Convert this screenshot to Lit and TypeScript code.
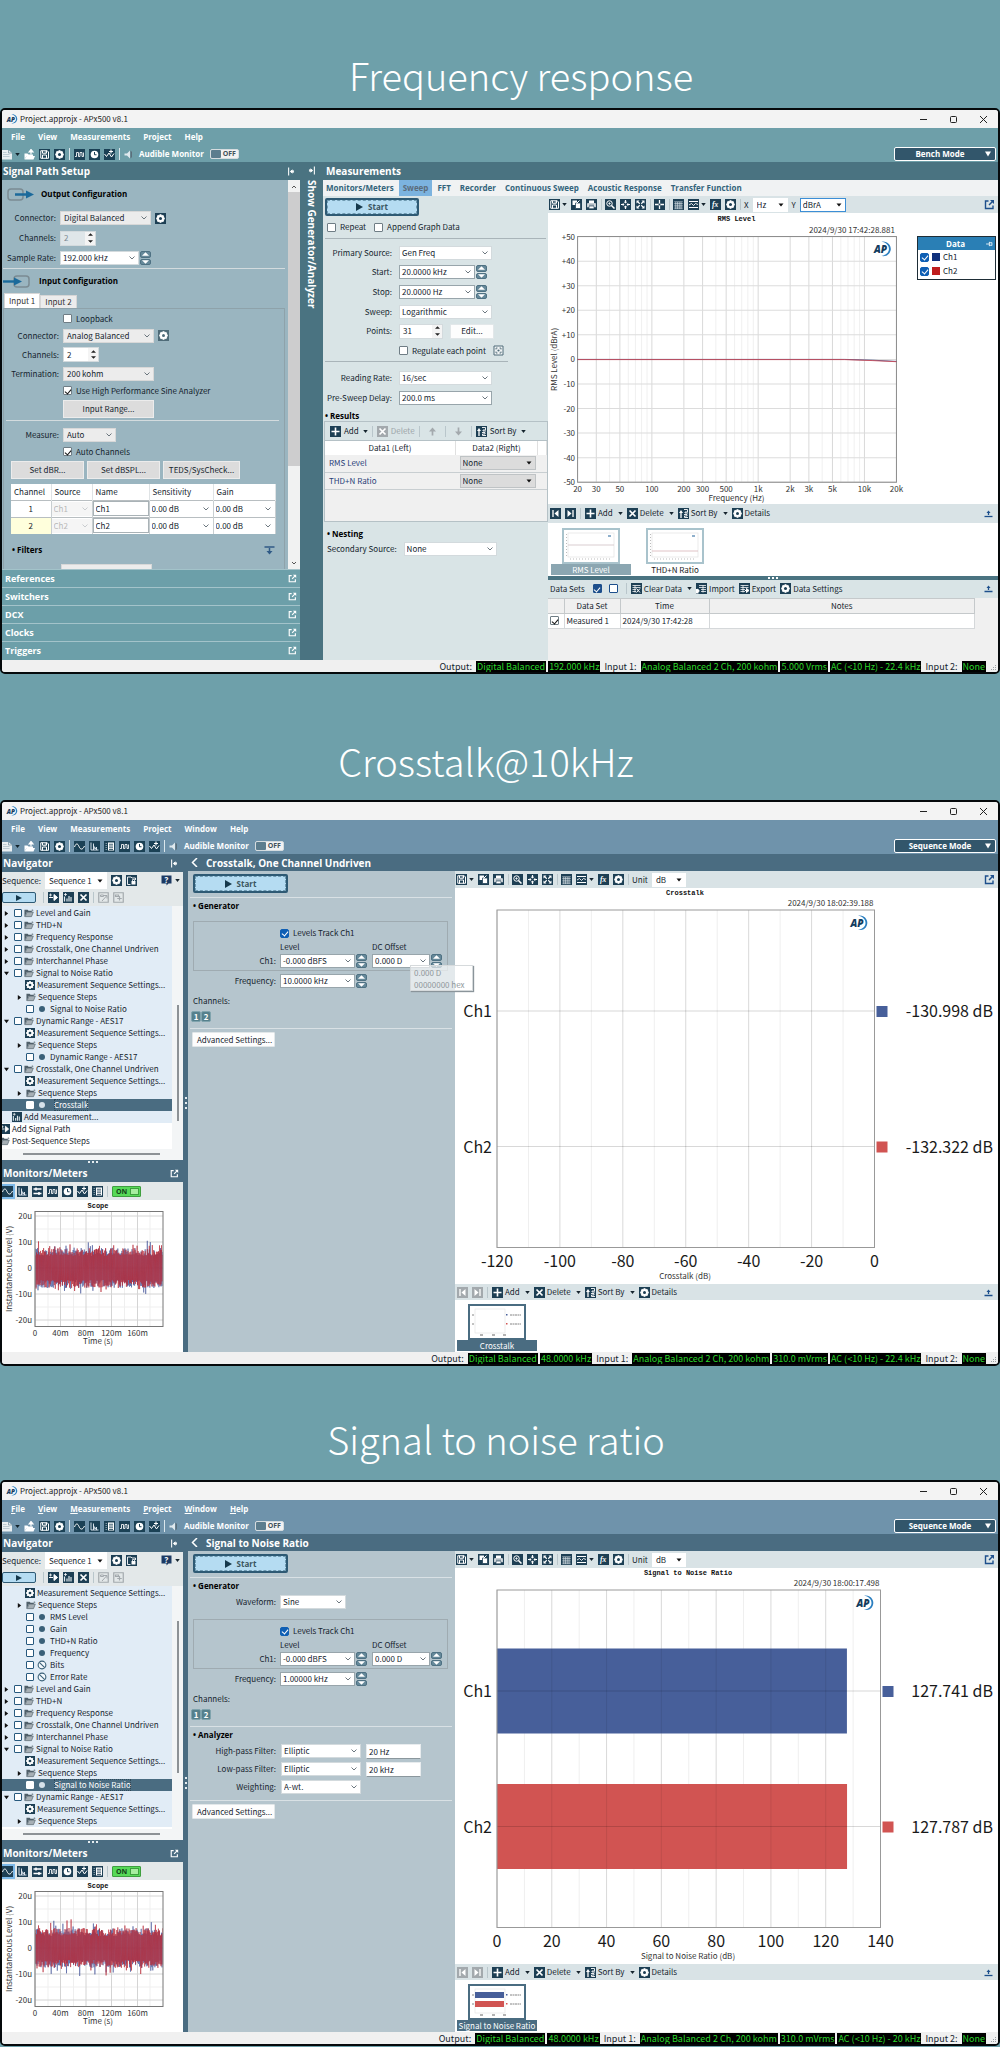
import { LitElement, html, svg, css, nothing, TemplateResult, SVGTemplateResult } from "lit";
import { customElement, property } from "lit/decorators.js";
import { classMap } from "lit/directives/class-map.js";

/* ---------- icons (22 x 22 artboard) ---------- */

const gearShape = svg`<g transform="translate(11 11)">
  <circle r="5.4" fill="none" stroke="#fff" stroke-width="3.4"/>
  ${[0, 45, 90, 135].map((a) => svg`<rect x="-1.9" y="-8.6" width="3.8" height="17.2" fill="#fff" transform="rotate(${a})"/>`)}
  <circle r="3" fill="currentColor"/></g>`;

const plate = svg`<rect width="22" height="22" fill="currentColor"/>`;

const icons: Record<string, SVGTemplateResult> = {
  page: svg`<path d="M0 2h13l7 6v13H0z" fill="#e9eff2"/><path d="M13 2v6h7" fill="none" stroke="#7d97a3" stroke-width="1.6"/><path d="M2 7h7M2 11h13M2 15h13" stroke="#a9bcc5" stroke-width="1.4"/>`,
  open: svg`<path d="M1 9h6l2 2h9v3H5L1 21z" fill="#fff"/><path d="M5 14h17l-3 7H1z" fill="#fff"/><path d="M14 11V4M10 6l4-5 4 5z" stroke="#fff" stroke-width="2.4" fill="#fff"/>`,
  save: svg`${plate}<path d="M3.5 3.5h13l2.5 2.5v12.5h-15.5z" fill="none" stroke="#fff" stroke-width="2"/><path d="M7 3.5v5h8v-5M7 19v-7h8v7" fill="none" stroke="#fff" stroke-width="2"/><path d="M11.5 5h2v2h-2z" fill="#fff"/>`,
  gear: svg`${plate}${gearShape}`,
  sine: svg`${plate}<path d="M1 12c3-8 6-8 9-1s7 7 11-1" fill="none" stroke="#fff" stroke-width="2"/>`,
  fft: svg`${plate}<path d="M4 3v15h15M9 18V5M9 9l3 7 3-4v6" fill="none" stroke="#e8eef6" stroke-width="1.8"/>`,
  list: svg`${plate}<path d="M8 3h12v16H8z" fill="#fff"/><path d="M10 6.5h8M10 10h8M10 13.5h8M10 17h8" stroke="currentColor" stroke-width="1.6"/><path d="M3 5h3M3 9h3M3 13h3M3 17h3" stroke="#9fb4c0" stroke-width="1.5"/>`,
  square: svg`${plate}<path d="M2 15h3V7h4v8h3V7h4v8h3V7" fill="none" stroke="#fff" stroke-width="1.7"/>`,
  clock: svg`${plate}<circle cx="11" cy="11" r="7.6" fill="#fff"/><path d="M11 6v5.5h4" fill="none" stroke="currentColor" stroke-width="2"/>`,
  trend: svg`${plate}<path d="M1 10l4 5 5-7 5 8 5-7" fill="none" stroke="#fff" stroke-width="2"/><path d="M14 1v8M10 5h8" stroke="#fff" stroke-width="2.2"/>`,
  meters: svg`${plate}<path d="M3 6h16M3 15h16" stroke="#fff" stroke-width="3"/><path d="M8 3v6M14 12v6" stroke="#fff" stroke-width="3"/>`,
  speaker: svg`<path d="M1 9h5l6-6v16l-6-6H1z" fill="#dfe9ee"/><path d="M13 3v16l3-3V6z" fill="#5b6f7b"/>`,
  copy: svg`${plate}<path d="M3 3h9v9H3z" fill="#fff"/><path d="M9 8h10v11H9z" fill="#fff" stroke="currentColor" stroke-width="1.5"/><path d="M17 3l-6 6" stroke="#fff" stroke-width="2"/>`,
  print: svg`${plate}<path d="M6 3h10v5H6z" fill="#fff"/><path d="M2.5 8.5h17v8h-17z" fill="#fff"/><path d="M5 12h12" stroke="currentColor" stroke-width="1.5"/><path d="M6 14h10v5.5H6z" fill="#fff" stroke="currentColor" stroke-width="1.3"/>`,
  zoom: svg`${plate}<circle cx="9" cy="9" r="5.5" fill="none" stroke="#fff" stroke-width="2"/><path d="M13 13l6 6" stroke="#fff" stroke-width="3"/><path d="M6.5 9h5M9 6.5v5" stroke="#fff" stroke-width="1.5"/>`,
  fit: svg`${plate}<path d="M11 2v6M11 14v6M2 11h6M14 11h6" stroke="#fff" stroke-width="2.4"/><path d="M7.5 5.5L11 9l3.5-3.5zM7.5 16.5L11 13l3.5 3.5zM5.5 7.5L9 11l-3.5 3.5zM16.5 7.5L13 11l3.5 3.5z" fill="#fff"/>`,
  expand: svg`${plate}<path d="M5 5l4.500 4.500M17 5l-4.500 4.500M5 17l4.500-4.500M17 17l-4.500-4.500" stroke="#fff" stroke-width="2.2"/><path d="M3 3h6L3 9zM19 3h-6l6 6zM3 19h6l-6-6zM19 19h-6l6-6z" fill="#fff"/>`,
  cross: svg`${plate}<path d="M11 2v18M2 11h18" stroke="#fff" stroke-width="2.6"/><circle cx="11" cy="11" r="2" fill="currentColor"/>`,
  table: svg`${plate}<path d="M2.5 5.5h17M2.5 9h17M2.5 12.5h17M2.5 16h17M2.5 19.5h17M5.5 6v14M9 6v14M12.5 6v14M16 6v14" stroke="#dfe8ec" stroke-width="1.2"/>`,
  style: svg`${plate}<path d="M2 5h18M2 17h18" stroke="#fff" stroke-width="2"/><path d="M2 12l5-3 4 4 4-4 5 2" fill="none" stroke="#fff" stroke-width="1.8"/>`,
  fx: svg`${plate}<text x="4" y="16.5" font-size="15" font-style="italic" font-weight="700" fill="#fff" font-family="Liberation Serif, serif">fx</text>`,
  first: svg`${plate}<path d="M6 4v14" stroke="#fff" stroke-width="2.6"/><path d="M17 4v14l-8-7z" fill="#fff"/>`,
  last: svg`${plate}<path d="M16 4v14" stroke="#fff" stroke-width="2.6"/><path d="M5 4v14l8-7z" fill="#fff"/>`,
  plus: svg`${plate}<path d="M11 3v16M3 11h16" stroke="#fff" stroke-width="3.2"/>`,
  x: svg`${plate}<path d="M5 5l12 12M17 5L5 17" stroke="#fff" stroke-width="3.4"/>`,
  sort: svg`${plate}<path d="M6 20V9" stroke="#fff" stroke-width="2.6"/><path d="M2 10l4-6 4 6z" fill="#fff"/><path d="M12 3h7v5h-5v2h6M12 13h6v3h-5v3h7" fill="none" stroke="#fff" stroke-width="1.8"/>`,
  dataClear: svg`${plate}<path d="M3 5h16M3 9h16M3 13h7M3 17h7M8 5v14" stroke="#fff" stroke-width="1.5"/><path d="M11 11l7 8M18 11l-7 8" stroke="#fff" stroke-width="2"/>`,
  dataIn: svg`${plate}<path d="M6 5h14M6 9h14M10 13h10M10 17h10M14 5v14" stroke="#fff" stroke-width="1.5"/><path d="M0 12h5v9H0z" fill="#fff"/><path d="M2 11l6 5-6 4" fill="#fff"/>`,
  dataOut: svg`${plate}<path d="M3 5h16M3 9h16M3 13h9M3 17h9M8 5v14" stroke="#fff" stroke-width="1.5"/><path d="M12 15h5M15 11l5 4-5 4z" stroke="#fff" stroke-width="2" fill="#fff"/>`,
  addPath: svg`${plate}<path d="M2 11h8M12 5v12l7-6z" stroke="#fff" stroke-width="2" fill="#fff"/><path d="M5 3v6M2 6h6" stroke="#fff" stroke-width="1.5"/>`,
  addMeas: svg`${plate}<path d="M3 19V9M8 19v-6M12 19V8M16 19v-9" stroke="#dfe8ec" stroke-width="2.4"/><path d="M5 2v6M2 5h6" stroke="#fff" stroke-width="1.5"/>`,
  lock: svg`${plate}<path d="M3 4h7l2 2h7v4" stroke="#fff" stroke-width="1.8" fill="none"/><path d="M3 4v15h6" stroke="#fff" stroke-width="1.8" fill="none"/><path d="M11 12h8v7h-8z" fill="#fff"/><path d="M13 12V9h4v3" stroke="#fff" stroke-width="1.5" fill="none"/>`,
  docIn: svg`<path d="M1.5 1.5h19v19h-19z" fill="none" stroke="currentColor" stroke-width="2.4"/><path d="M5 6h6v3H5zM8 18l9-10M12 7h6v6" fill="none" stroke="currentColor" stroke-width="2"/>`,
  docAdd: svg`<path d="M1.5 1.5h19v19h-19z" fill="none" stroke="currentColor" stroke-width="2.4"/><path d="M5 6h6v3H5zM13 8v9M8.5 13h9" fill="none" stroke="currentColor" stroke-width="2.4"/>`,
  help: svg`<path d="M1 1h20v16h-6l-4 4v-4H1z" fill="#1c3a63"/><text x="11" y="15" text-anchor="middle" font-size="16" font-weight="700" fill="#fff" font-family="Open Sans, sans-serif">?</text>`,
  folder: svg`<path d="M1 4h7l2 2h7v3H6L2 19H1z" fill="#50606a"/><path d="M6.5 9h14l-4 10H2.5z" fill="#a6afb5" stroke="#50606a" stroke-width="1.4"/><path d="M18 3l2 2-4 2" fill="none" stroke="#50606a" stroke-width="1.5"/>`,
  popout: svg`<path d="M9 4H3v15h15v-6" fill="none" stroke="currentColor" stroke-width="2.8"/><path d="M12 2h8v8l-3-3-6 6-2-2 6-6z" fill="currentColor"/>`,
  upload: svg`<path d="M3 17h16" stroke="currentColor" stroke-width="2.6"/><path d="M11 14V9" stroke="currentColor" stroke-width="2.6"/><path d="M7 10l4-5 4 5z" fill="currentColor"/>`,
  filterDown: svg`<path d="M1 4h20" stroke="currentColor" stroke-width="3"/><path d="M11 6v9" stroke="currentColor" stroke-width="3"/><path d="M5 12h12l-6 7z" fill="currentColor"/>`,
  pin: svg`<path d="M12 5v12M19 7v8M12 7.5h7M12 14.5h7" stroke="currentColor" stroke-width="2.2"/><path d="M3 11h9" stroke="currentColor" stroke-width="2.2"/>`,
  collapse: svg`<path d="M4 1v20" stroke="currentColor" stroke-width="2.6"/><path d="M16 11H10M8 11l5-4v8zM16 8v6" stroke="currentColor" stroke-width="2" fill="currentColor"/>`,
  collapseR: svg`<path d="M18 1v20" stroke="currentColor" stroke-width="2.6"/><path d="M6 11h6M14 11L9 7v8zM6 8v6" stroke="currentColor" stroke-width="2" fill="currentColor"/>`,
  up: svg`<path d="M11 19V9" stroke="currentColor" stroke-width="3.4"/><path d="M4 11l7-8 7 8z" fill="currentColor"/>`,
  down: svg`<path d="M11 3v10" stroke="currentColor" stroke-width="3.4"/><path d="M4 11l7 8 7-8z" fill="currentColor"/>`,
  ban: svg`<circle cx="11" cy="11" r="8.5" fill="#f5fafe" stroke="currentColor" stroke-width="2.4"/><path d="M5 5l12 12" stroke="currentColor" stroke-width="2.4"/>`,
  dot: svg`<circle cx="11" cy="11" r="6.6" fill="currentColor"/>`,
  target: svg`<path d="M2 2h18v18H2z" fill="#f1f4f5" stroke="currentColor" stroke-width="2"/><path d="M6 9V6h3M13 6h3v3M16 13v3h-3M9 16H6v-3" fill="none" stroke="currentColor" stroke-width="1.8"/><circle cx="11" cy="11" r="2.2" fill="currentColor"/>`,
};

const icon = (name: string, cls = "") =>
  html`<svg class="ic ${cls}" viewBox="0 0 22 22" aria-hidden="true">${icons[name]}</svg>`;

const apMark = (x: number, y: number) => svg`<g transform="translate(${x} ${y})">
  <text x="-7" y="4" font-family="Open Sans, sans-serif" font-size="10" font-weight="800" font-style="italic" fill="#123c5e">AP</text>
  <path d="M0.5 -7.5C8 -8.5 11 -2 9.5 2C8 6.5 4.5 7.5 0.5 7C5 6 8 3.5 8 0C8 -4 5 -6.5 0.5 -7.5z" fill="#2b7fc0"/></g>`;

const caret = html`<svg class="caret" viewBox="0 0 6 4" aria-hidden="true"><path d="M0 0h6L3 4z" fill="currentColor"/></svg>`;

/* ---------- shared form pieces ---------- */

const base = css`
  :host {
    display: block;
    font-family: "Noto Sans CJK SC", "Noto Sans", sans-serif;
    font-size: 8px;
    line-height: 12px;
    color: #15242e;
  }
  * { box-sizing: border-box; }
  button, input, select { font: inherit; color: inherit; margin: 0; }
  button { padding: 0; border: 0; background: none; white-space: nowrap; }
  .ic { width: 11px; height: 11px; flex: none; display: block; color: #1d3f54; }
  .ic.off { color: #a3a9ad; }
  .ic.white { color: #fff; }
  .ic.blue { color: #1d4f8c; }
  .ic.teal { color: #4f6b78; }
  .caret { width: 5px; height: 3px; flex: none; }
  .bar { display: flex; align-items: center; white-space: nowrap; }
  .bar button { display: flex; align-items: center; gap: 3px; }
  .bar i { width: 1px; height: 11px; background: #b9c6cb; flex: none; }
  .grow { flex: 1; }

  .sel { display: grid; align-items: center; height: 14px; min-width: 0; }
  .sel select {
    grid-area: 1 / 1; appearance: none; width: 100%; height: 14px; min-width: 0;
    border: 1px solid #d3dadd; background: #fff; padding: 0 0 0 2px; border-radius: 0; line-height: 12px;
  }
  .sel svg { grid-area: 1 / 1; justify-self: end; margin-right: 4px; width: 6px; height: 4px; pointer-events: none; }
  .sel.gray select { background: #ececec; border-color: #d8d8d8; padding-left: 3px; }
  .sel.edge select { border-color: #98a5ab; }
  .sel.plain select { border-color: #fff; padding-left: 3px; }
  .sel.focus select { border: 1px solid #3c8ed6; }
  .sel.dim { color: #9b9b9b; }
  .sel.dim select { background: #f1f1f1; border-color: #f1f1f1; }
  .spin { width: 11px; height: 14px; display: grid; gap: 1px; flex: none; }
  .spin button { background: #66899a; border-radius: 2px; display: grid; place-items: center; border: 1px solid #4e7183; min-height: 0; }
  .spin svg { width: 7px; height: 4px; display: block; color: #fff; }
  .num { display: flex; height: 15px; background: #fff; border: 1px solid #d3dadd; }
  .num input { width: 100%; min-width: 0; border: 0; background: none; padding: 0 0 0 3px; }
  .num .spin { width: 10px; height: 13px; gap: 0; }
  .num .spin button { background: #f4f4f4; border: 0; border-radius: 0; }
  .num .spin svg { color: #222; width: 5px; height: 3px; }
  .num input:disabled { background: #dfe6e9; color: #7c8a92; }
  .text { height: 15px; border: 1px solid #e8ecee; border-bottom-color: #8b979d; background: #fff; padding: 0 0 0 2px; width: 100%; min-width: 0; }
  .cb { display: flex; align-items: center; gap: 4px; white-space: nowrap; }
  input[type="checkbox"] {
    appearance: none; width: 9px; height: 9px; border: 1px solid #6f7d85; background: #fff;
    display: grid; place-items: center; flex: none; border-radius: 1px;
  }
  input[type="checkbox"]:checked::before {
    content: ""; width: 3px; height: 5px; border: solid #111; border-width: 0 1px 1px 0; transform: rotate(40deg);
  }
  input.blue:checked { background: #0f5fb4; border-color: #0f5fb4; border-radius: 2px; }
  input.blue:checked::before { border-color: #fff; }
  .btn { background: #fdfdfd; border: 1px solid #e2e7e9; height: 15px; padding: 0 4px; border-radius: 1px; }
  .hd, .start, .sect, .on, .strong { font-family: "Open Sans", "Noto Sans", sans-serif; font-weight: 700; }
  .start {
    height: 18px; border: 2px solid #2e5a74; border-radius: 2px; background: #b5dcf2; outline: 1px dashed #6f9ab1; outline-offset: -3px;
    color: #3a5560; display: flex; align-items: center; justify-content: center; gap: 5px;
  }
  .start svg { width: 7px; height: 8px; color: #16394c; }
  .hr { height: 1px; background: #a9b4b9; border: 0; margin: 0; }
  .sect { margin: 0; font-size: 8px; color: #000; }
  .lbl { text-align: right; white-space: nowrap; }
  .graphbar { height: 17px; background: #d9e3e6; padding: 0 3px 0 1px; gap: 4px; }
  .bar.graphbar button { gap: 2px; }
  .graphbar i { margin-right: -1px; }
  .navbar { height: 17px; background: #d9e3e6; padding: 0 4px 0 2px; gap: 4px; color: #16242e; }
  .bar.navbar button { gap: 2px; }
  .grp { display: flex; align-items: center; gap: 5px; }
  .chart { display: block; width: 100%; height: auto; background: #fff; }
  .chart text { font-family: "Noto Sans CJK SC", "Noto Sans", sans-serif; font-size: 8px; fill: #333; }
  .chart g text { font-family: "Open Sans", sans-serif; font-size: 10px; fill: #123c5e; }
  .chart .ttl { font-family: "Liberation Mono", monospace; font-weight: 700; font-size: 7px; fill: #111; }
  .chart .big { font-size: 16px; fill: #1a1a1a; }
`;

const chevron = html`<svg viewBox="0 0 12 8" aria-hidden="true"><path d="M1 1l5 5 5-5" fill="none" stroke="#5b6870" stroke-width="1.8"/></svg>`;
const solid = html`<svg viewBox="0 0 12 8" aria-hidden="true"><path d="M1 1h10L6 7z" fill="#111"/></svg>`;

const select = (value: string, o: { id?: string; cls?: string; label?: string; arrow?: TemplateResult; disabled?: boolean } = {}) =>
  html`<span class="sel ${o.cls ?? ""}"><select id=${o.id ?? nothing} aria-label=${o.label ?? nothing} ?disabled=${o.disabled}>
    <option>${value}</option></select>${o.arrow ?? chevron}</span>`;

const spin = () => html`<span class="spin">
  <button aria-label="Increase"><svg viewBox="0 0 8 4"><path d="M4 0l4 4H0z" fill="currentColor"/></svg></button>
  <button aria-label="Decrease"><svg viewBox="0 0 8 4"><path d="M0 0h8L4 4z" fill="currentColor"/></svg></button></span>`;

const number = (value: string, id: string, disabled = false) =>
  html`<span class="num"><input id=${id} .value=${value} ?disabled=${disabled} />${spin()}</span>`;

const check = (text: string, checked = false, cls = "") =>
  html`<label class="cb"><input type="checkbox" class=${cls} .checked=${checked} />${text}</label>`;

const tool = (name: string, label: string, drop = false, cls = "") =>
  html`<button aria-label=${label}>${icon(name, cls)}${drop ? caret : nothing}</button>`;

const cmd = (name: string, text: string, drop = false) =>
  html`<span class="grp"><button>${icon(name)}${text}</button>${drop ? html`<button aria-label="${text} options">${caret}</button>` : nothing}</span>`;

const startButton = () => html`<button class="start"><svg viewBox="0 0 7 8"><path d="M0 0l7 4-7 4z" fill="currentColor"/></svg>Start</button>`;

const navBar = (dim: boolean) => html`<div class="bar navbar">
  ${tool("first", "First", false, dim ? "off" : "")}${tool("last", "Last", false, dim ? "off" : "")}<i></i>
  ${cmd("plus", "Add", true)}${cmd("x", "Delete", true)}${cmd("sort", "Sort By", true)}${cmd("gear", "Details")}
  <span class="grow"></span>${tool("upload", "Collapse", false, "blue")}</div>`;

/* ---------- window frame ---------- */

interface StatusItem { label?: string; value?: string; }

@customElement("apx-frame")
class ApxFrame extends LitElement {
  @property({ type: Array }) menus: string[] = [];
  @property({ type: Array }) tools: string[] = [];
  @property({ type: Array }) status: StatusItem[] = [];
  @property() mode = "";
  @property({ type: Boolean }) mnemonics = false;

  static styles = [base, css`
    .frame { border: 2px solid #05090b; border-radius: 5px; overflow: hidden; background: #f0f0f0; }
    .title { height: 18px; background: #f3f3f3; display: flex; align-items: center; padding: 0 0 0 4px; color: #222; }
    .title .logo { width: 12px; height: 10px; margin-right: 2px; }
    .title h3 { font: inherit; margin: 0; flex: 1; }
    .title button { width: 30px; height: 18px; display: grid; place-items: center; }
    .title button svg { width: 9px; height: 9px; }
    .head { background: var(--bar); color: #fff; display: grid; grid-template-columns: 1fr auto; height: 34px; }
    .menu { display: flex; gap: 13px; padding-left: 9px; height: 18px; align-items: center; grid-column: 1 / 3; }
    .menu a { color: #fff; text-decoration: none; }
    .menu a u { text-underline-offset: 1px; }
    .tools { height: 16px; gap: 4px; }
    .bar.tools button { gap: 2px; }
    .tools i { background: #dbe7ec; height: 12px; width: 1px; }
    .tools .caret { color: #12232c; }
    .tools .ic { color: #1b4155; }
    .bar.tools .tog { display: grid; grid-template-columns: 10px 1fr; width: 29px; height: 10px; background: #f2f2f2; border-radius: 2px; border: 1px solid #d5dcdf; margin-left: 2px; color: #43525a; font-size: 7px; line-height: 8px; text-align: center; gap: 0; }
    .tog b { background: #5c7d8e; height: 8px; border-radius: 1px; }
    .mode { align-self: center; margin-right: 2px; width: 102px; height: 14px; border: 1px solid #fff; border-radius: 2px; background: #32566b; color: #fff; display: grid; grid-template-columns: 1fr 8px; align-items: center; padding-right: 2px; }
    .mode svg { width: 6px; height: 6px; }
    .status { height: 12px; display: flex; justify-content: flex-end; align-items: center; gap: 2px; padding-right: 12px; background: #f0f0f0; font-size: 9px; line-height: 11px; white-space: nowrap; position: relative; }
    .status b { font-weight: 400; background: #000; color: #2bd42b; padding: 0 1px; height: 11px; }
    .status span { padding: 0 2px; }
    .grip { position: absolute; right: 0; bottom: 0; width: 8px; height: 8px; }
  `];

  render() {
    return html`<div class="frame">
      <div class="title">
        <svg class="logo" viewBox="-8 -8 19 16" aria-hidden="true">${apMark(0, 0)}</svg>
        <h3>Project.approjx - APx500 v8.1</h3>
        <button aria-label="Minimize"><svg viewBox="0 0 9 9"><path d="M1 4.5h7" stroke="#222"/></svg></button>
        <button aria-label="Maximize"><svg viewBox="0 0 9 9"><rect x="1.5" y="1.5" width="6" height="6" rx="1" fill="none" stroke="#222"/></svg></button>
        <button aria-label="Close"><svg viewBox="0 0 9 9"><path d="M1 1l7 7M8 1L1 8" stroke="#222"/></svg></button>
      </div>
      <div class="head">
        <nav class="menu strong">${this.menus.map((m) => html`<a href="#">${this.mnemonics ? html`<u>${m[0]}</u>${m.slice(1)}` : m}</a>`)}</nav>
        <div class="bar tools strong">
          ${tool("page", "New", true)}${tool("open", "Open")}${tool("save", "Save")}${tool("gear", "Settings")}<i></i>
          ${this.tools.map((t) => tool(t, t))}<i></i>
          ${tool("speaker", "Speaker")}<span>Audible Monitor</span>
          <button class="tog" aria-label="Audible monitor off"><b></b>OFF</button>
        </div>
        <button class="mode strong">${this.mode}<svg viewBox="0 0 7 6"><path d="M0 0h7L3.5 6z" fill="#fff"/></svg></button>
      </div>
      <slot></slot>
      <div class="status">
        ${this.status.map((s) => (s.label ? html`<span>${s.label}</span>` : html`<b>${s.value}</b>`))}
        <svg class="grip" viewBox="0 0 8 8" aria-hidden="true"><path d="M5 5h1v1H5zM3 5h1v1H3zM5 3h1v1H5zM1 5h1v1H1zM3 3h1v1H3zM5 1h1v1H5z" fill="#9aa0a3"/></svg>
      </div>
    </div>`;
  }
}

/* ---------- bench mode ---------- */

@customElement("bench-view")
class BenchView extends LitElement {
  static styles = [base, css`
    .cols { display: grid; grid-template-columns: 298px 23px minmax(0, 1fr); }
    .hd { height: 18px; background: #4a7381; color: #fff; font-size: 10px; line-height: 18px; margin: 0; display: flex; align-items: center; justify-content: space-between; padding: 0 4px 0 1px; white-space: nowrap; }
    .hd .ic, .strip .ic { color: #fff; width: 9px; height: 9px; }
    .setup { display: flex; background: #9ab5c0; height: 389px; overflow: hidden; }
    .form { flex: 1; min-width: 0; padding: 0 3px 0 1px; }
    .form h4 { display: flex; align-items: center; gap: 6px; margin: 0; height: 28px; font-size: 8px; color: #000; padding-left: 4px; }
    .form h4 svg { width: 28px; height: 14px; }
    .form h4.in { height: 24px; padding-left: 0; gap: 8px; }
    .row { display: grid; grid-template-columns: 53px auto auto 1fr; column-gap: 4px; height: 20px; align-items: center; }
    .box .row { height: 19px; }
    .row.slim, .box .row.slim { height: 15px; }
    .box .row.high { height: 22px; }
    .meas { padding-top: 4px; }
    .w91 { width: 91px; } .w79 { width: 79px; } .w53 { width: 53px; }
    .w36 { width: 36px; }
    .spin { margin-left: -3px; } .num .spin { margin-left: 0; }
    .light { background: #d3dbde; }
    .tabs { display: flex; align-items: end; height: 15px; padding-left: 1px; }
    .tabs button { background: #ececec; height: 13px; padding: 0 4px; border: 1px solid #d6d6d6; border-bottom: 0; color: #333; }
    .tabs button.on { background: #fff; height: 15px; font-family: inherit; font-weight: 400; }
    .box { border: 1px solid #8ea2aa; border-bottom: 0; height: 262px; padding: 2px 5px 0 2px; }
    .gbtn { background: #dcdcdc; border: 1px solid #ececec; height: 18px; }
    .trio { display: grid; grid-template-columns: 73px 73px 77px; gap: 3px; padding: 2px 0 5px 5px; }
    .chan { margin-left: 5px; width: 265px; border-collapse: collapse; background: #fff; table-layout: fixed; }
    .chan th { font-weight: 400; text-align: left; height: 16px; padding: 0 0 0 3px; border-right: 1px solid #dfe3e5; }
    .chan td { padding: 0; height: 17px; border-top: 1px solid #b8bec1; border-right: 1px solid #c8ced1; text-align: center; }
    .chan td .sel select { border: 0; padding-left: 2px; }
    .chan td input { width: 100%; height: 15px; border: 1px solid #a9b2b6; padding: 0 2px; background: #fff; display: block; }
    .chan .act { background: #ffffdc; }
    .filters { display: flex; justify-content: space-between; align-items: center; padding: 8px 4px 0 6px; height: 24px; color: #000; }
    .filters .ic { color: #2f5a86; }
    .peek { margin: 6px 0 0 55px; width: 91px; }
    .scroll { width: 12px; background: #f1f2f2; display: flex; flex-direction: column; align-items: center; justify-content: space-between; }
    .scroll svg { width: 6px; height: 12px; }
    .scroll div { width: 12px; flex: 1; }
    .scroll div.thumb { background: #cdcdce; flex: 3; }
    .acc { background: #6c9fa9; padding-bottom: 1px; }
    .acc button { width: 100%; height: 18px; border-top: 1px solid #a3c3ca; color: #fff; font-size: 9px; display: flex; align-items: center; justify-content: space-between; padding: 0 3px; }
    .acc .ic { width: 9px; height: 9px; }
    .strip { background: #4a7381; color: #fff; font-size: 10px; display: flex; flex-direction: column; align-items: center; gap: 5px; padding-top: 4px; }
    .strip button { writing-mode: vertical-rl; line-height: 14px; }
    .main { display: grid; grid-template-columns: minmax(0, 225px) minmax(0, 1fr); grid-template-rows: 18px 16px 1fr; background: #d9e4e6; }
    .tabrow { grid-column: 1 / 3; background: #f0f2f3; display: flex; gap: 9px; padding-left: 3px; }
    .tabrow a { color: #33647b; text-decoration: none; line-height: 16px; white-space: nowrap; }
    .tabrow a.cur { background: #7cb3df; color: #5b6c7c; padding: 0 4px; margin: 0 -4px; }
    .main .hd { grid-column: 1 / 3; padding-left: 3px; }
    .cfg { padding-top: 2px; }
    .pad { padding: 0 2px; }
    .pad .start { width: 94px; }
    .opts { display: flex; gap: 8px; height: 22px; align-items: center; padding-left: 2px; }
    .block { padding-top: 4px; }
    .frow { display: grid; grid-template-columns: 69px auto auto 1fr; column-gap: 7px; align-items: center; height: 19px; }
    .frow.tall { height: 20px; }
    .frow .spin { margin-left: -6px; } .frow .num .spin { margin-left: 0; }
    .rate { padding-top: 6px; }
    .rule { padding: 1px 40px 0 2px; }
    .w93 { width: 93px; } .w76 { width: 76px; } .w44 { width: 44px; }
    .sect.res-t { padding: 4px 2px 0; line-height: 10px; }
    .results { border: 1px solid #b5c1c6; background: #f0f0f0; height: 101px; margin-left: 1px; }
    .rbar { height: 19px; background: #d9e4e6; padding-left: 5px; gap: 4px; border-bottom: 1px solid #b5c1c6; }
    .rbar .up { margin: 0 3px; }
    .rbar .dis { color: #9da5a9; }
    .res { width: 100%; border-collapse: collapse; table-layout: fixed; }
    .res th { font-weight: 400; height: 14px; padding: 0; background: #fff; border-right: 1px solid #e0e0e0; }
    .res td { height: 17px; padding: 0 2px 0 4px; border-bottom: 1px solid #c8ced1; color: #2a3f78; }
    .res .sel select { background: #dcdcdc; border-color: #bfc3c5; color: #15242e; }
    .nest { padding: 6px 4px; }
    .nestrow { display: grid; grid-template-columns: max-content 93px; gap: 7px; align-items: center; padding-top: 2px; }
    .graph { background: #fff; min-width: 0; display: flex; flex-direction: column; }
    .graphbar .sel { width: 35px; height: 15px; }
    .graphbar .sel.focus { width: 46px; }
    .plot { display: flex; align-items: flex-start; padding-right: 2px; }
    .plot .chart { flex: 1; min-width: 0; }
    .legend { width: 79px; margin-top: 23px; border: 1px solid #1e2d36; flex: none; background: #fff; padding-bottom: 1px; }
    .legend h5 { margin: 0; font-size: 8px; line-height: 13px; background: #2a7fb5; color: #fff; display: grid; grid-template-columns: 1fr 10px; text-align: center; align-items: center; padding-left: 8px; }
    .legend h5 .ic { width: 8px; height: 8px; }
    .legend label { display: flex; align-items: center; gap: 3px; height: 14px; padding-left: 2px; }
    .legend s { width: 8px; height: 8px; background: #10307c; }
    .legend .red s { background: #bf1d1d; }
    .navbar { height: 19px; }
    .thumbs { display: flex; height: 53px; gap: 4px; padding: 5px 3px 0; background: #fff; }
    .thumbs a { width: 80px; color: #222; text-decoration: none; text-align: center; display: grid; grid-template-rows: 36px 11px; justify-items: center; line-height: 11px; }
    .thumbs svg { width: 58px; height: 36px; border: 2px solid #a9c3cc; background: #fff; }
    .thumbs a span { width: 100%; }
    .thumbs a.cur span { background: #8ba6b1; color: #fff; }
    .split { height: 4px; background: #4a7381; color: #fff; display: flex; justify-content: center; align-items: center; gap: 2px; }
    .split u { width: 2px; height: 2px; background: #fff; }
    .navbar.sets { height: 18px; background: #d9e4e6; }
    .ds { border-collapse: collapse; width: 427px; table-layout: fixed; background: #fff; }
    .ds th { font-weight: 400; background: #f0f0f0; border: 1px solid #c5c9cb; border-left: 0; height: 15px; padding: 0; }
    .ds td { border: 1px solid #d5d8da; border-left: 0; height: 15px; padding: 0 2px; white-space: nowrap; }
    .dswrap { background: #f0f0f0; flex: 1; }
    .sq { display: flex; gap: 7px; margin: 0 4px; }
    .sq input:checked { background: #1d4f8c; border-color: #1d4f8c; }
    .sq input { border-color: #1d4f8c; }
    .sq input:checked::before { border-color: #fff; }
  `];

  private plot() {
    const x0 = 29.5, x1 = 347.5, y0 = 23.5, y1 = 268.5;
    const fx = (f: number) => x0 + ((x1 - x0) * Math.log10(f / 20)) / 3;
    const major = [30, 50, 100, 200, 300, 500, 1000, 2000, 3000, 5000, 10000];
    const minor = [40, 60, 70, 80, 90, 400, 600, 700, 800, 900, 4000, 6000, 7000, 8000, 9000];
    const ticks: [number, string][] = [[20, "20"], [30, "30"], [50, "50"], [100, "100"], [200, "200"], [300, "300"], [500, "500"], [1000, "1k"], [2000, "2k"], [3000, "3k"], [5000, "5k"], [10000, "10k"], [20000, "20k"]];
    const levels = [50, 40, 30, 20, 10, 0, -10, -20, -30, -40, -50];
    const fy = (v: number) => y0 + ((50 - v) * (y1 - y0)) / 100;
    return html`<svg class="chart" viewBox="0 0 368 290" role="img" aria-label="RMS Level">
      ${minor.map((f) => svg`<path d="M${fx(f)} ${y0}V${y1}" stroke="#f0f0f0"/>`)}
      ${major.map((f) => svg`<path d="M${fx(f)} ${y0}V${y1}" stroke="#d9d9d9"/>`)}
      ${levels.map((v) => svg`<path d="M${x0} ${fy(v)}H${x1}" stroke="#dcdcdc"/>`)}
      <rect x=${x0} y=${y0} width=${x1 - x0} height=${y1 - y0} fill="none" stroke="#8a8a8a"/>
      <path d="M${x0} 146H${fx(6500)}L${fx(12000)} 146.8L${x1} 148" fill="none" stroke="#2f3f7c" stroke-width="0.8"/>
      <path d="M${x0} 146.2H${fx(6500)}L${fx(12000)} 147.2L${x1} 148.3" fill="none" stroke="#c94a58" stroke-width="0.9"/>
      ${apMark(332, 36)}
      <text class="ttl" x="188" y="8" text-anchor="middle">RMS Level</text>
      <text x="346" y="20" text-anchor="end">2024/9/30 17:42:28.881</text>
      ${levels.map((v) => svg`<text x="27" y=${fy(v) + 3} text-anchor="end">${v > 0 ? "+" + v : v}</text>`)}
      ${ticks.map(([f, t]) => svg`<text x=${fx(f)} y="278" text-anchor="middle">${t}</text>`)}
      <text x="188" y="287" text-anchor="middle">Frequency (Hz)</text>
      <text transform="translate(9 146) rotate(-90)" text-anchor="middle">RMS Level (dBrA)</text>
    </svg>`;
  }

  private thumb(y: number, on: boolean) {
    return html`<svg viewBox="0 0 54 32" preserveAspectRatio="none" aria-hidden="true">
      <rect x="4" y="3" width="46" height="24" fill="none" stroke="#ddd" stroke-width="0.6"/>
      <path d="M4 ${y}H50" stroke=${on ? "#cfc0c4" : "#d8b4b8"} stroke-width="0.8"/>
      <path d="M2.5 4v22M6 29h42" stroke="#aaa" stroke-width="0.8" stroke-dasharray="1 2"/><path d="M44 5h3v2h-3z" fill="#8fb0cc"/></svg>`;
  }

  private channelRow(n: string, act: boolean) {
    return html`<tr><td class=${classMap({ act })}>${n}</td>
      <td>${select("Ch" + n, { cls: "dim", label: "Source", disabled: true })}</td>
      <td><input aria-label="Name" .value=${"Ch" + n} /></td>
      <td>${select("0.00 dB", { label: "Sensitivity" })}</td><td>${select("0.00 dB", { label: "Gain" })}</td></tr>`;
  }

  render() {
    const field = (label: string, id: string, control: TemplateResult, extra: unknown = nothing, cls = "row") =>
      html`<div class=${cls}><label class="lbl" for=${id}>${label}</label>${control}${extra}</div>`;
    return html`<div class="cols">
      <section>
        <h2 class="hd">Signal Path Setup${icon("collapse")}</h2>
        <div class="setup">
          <div class="form">
            <h4 class="strong"><svg viewBox="0 0 28 14"><rect x="1" y="2" width="15" height="11" rx="3" fill="none" stroke="#7b8b92" stroke-width="1.5"/><path d="M8 7.5h12" stroke="#1b6a9b" stroke-width="2.4"/><path d="M19 3.5l8 4-8 4z" fill="#1b6a9b"/></svg>Output Configuration</h4>
            ${field("Connector:", "oc", select("Digital Balanced", { id: "oc", cls: "gray w91" }), icon("gear"))}
            ${field("Channels:", "och", html`<span class="w36">${number("2", "och", true)}</span>`)}
            ${field("Sample Rate:", "osr", select("192.000 kHz", { id: "osr", cls: "w79" }), spin())}
            <hr class="hr light" />
            <h4 class="in strong"><svg viewBox="0 0 28 14"><rect x="11" y="2" width="15" height="11" rx="3" fill="none" stroke="#7b8b92" stroke-width="1.5"/><path d="M0 7.5h12" stroke="#1b6a9b" stroke-width="2.4"/><path d="M11 3.5l8 4-8 4z" fill="#1b6a9b"/></svg>Input Configuration</h4>
            <div class="tabs"><button class="on">Input 1</button><button>Input 2</button></div>
            <div class="box">
              <div class="row slim"><span></span>${check("Loopback")}</div>
              ${field("Connector:", "ic", select("Analog Balanced", { id: "ic", cls: "gray w91" }), icon("gear", "teal"))}
              ${field("Channels:", "ich", html`<span class="w36">${number("2", "ich")}</span>`)}
              ${field("Termination:", "it", select("200 kohm", { id: "it", cls: "gray w91" }))}
              <div class="row slim"><span></span>${check("Use High Performance Sine Analyzer", true)}</div>
              <div class="row high"><span></span><button class="gbtn w91">Input Range...</button></div>
              <hr class="hr light" />
              <div class="meas">${field("Measure:", "im", select("Auto", { id: "im", cls: "gray w53" }))}</div>
              <div class="row slim"><span></span>${check("Auto Channels", true)}</div>
              <div class="trio"><button class="gbtn">Set dBR...</button><button class="gbtn">Set dBSPL...</button><button class="gbtn">TEDS/SysCheck...</button></div>
              <table class="chan">
                <colgroup><col width="40" /><col width="41" /><col width="57" /><col width="64" /><col /></colgroup>
                <tr><th>Channel</th><th>Source</th><th>Name</th><th>Sensitivity</th><th>Gain</th></tr>
                ${this.channelRow("1", false)}${this.channelRow("2", true)}
              </table>
              <div class="filters strong"><span>• Filters</span>${icon("filterDown")}</div>
              <div class="peek">${select("", { cls: "gray", label: "Filter" })}</div>
            </div>
          </div>
          <div class="scroll" aria-hidden="true"><svg viewBox="0 0 6 12"><path d="M1 8l2-2 2 2" fill="none" stroke="#555"/></svg><div class="thumb"></div><div></div><svg viewBox="0 0 6 12"><path d="M1 5l2 2 2-2" fill="none" stroke="#555"/></svg></div>
        </div>
        <div class="acc">${["References", "Switchers", "DCX", "Clocks", "Triggers"].map((t) => html`<button class="strong">${t}${icon("popout", "white")}</button>`)}</div>
      </section>
      <div class="strip strong">${icon("collapseR")}<button>Show Generator/Analyzer</button></div>
      <section class="main">
        <h2 class="hd">Measurements</h2>
        <nav class="tabrow strong">${["Monitors/Meters", "Sweep", "FFT", "Recorder", "Continuous Sweep", "Acoustic Response", "Transfer Function"].map((t) => html`<a href="#" class=${classMap({ cur: t === "Sweep" })}>${t}</a>`)}</nav>
        <div class="cfg">
          <div class="pad">
            ${startButton()}
            <div class="opts">${check("Repeat")}${check("Append Graph Data")}</div>
            <hr class="hr" />
          </div>
          <div class="block">
            ${field("Primary Source:", "ps", select("Gen Freq", { id: "ps", cls: "w93" }), nothing, "frow")}
            ${field("Start:", "st", select("20.0000 kHz", { id: "st", cls: "edge w76" }), spin(), "frow tall")}
            ${field("Stop:", "sp", select("20.0000 Hz", { id: "sp", cls: "edge w76" }), spin(), "frow tall")}
            ${field("Sweep:", "sw", select("Logarithmic", { id: "sw", cls: "w93" }), nothing, "frow")}
            ${field("Points:", "pt", html`<span class="w44">${number("31", "pt")}</span>`, html`<button class="btn w44">Edit...</button>`, "frow tall")}
            <div class="frow"><span></span>${check("Regulate each point")}${icon("target", "teal")}</div>
          </div>
          <div class="rule"><hr class="hr" /></div>
          <div class="rate">
            ${field("Reading Rate:", "rr", select("16/sec", { id: "rr", cls: "w93" }), nothing, "frow tall")}
            ${field("Pre-Sweep Delay:", "pd", select("200.0 ms", { id: "pd", cls: "edge w93" }), nothing, "frow")}
          </div>
          <h4 class="sect res-t">• Results</h4>
          <div class="results">
            <div class="bar rbar">${cmd("plus", "Add")}${caret}<i></i><button class="dis">${icon("x", "off")}Delete</button><i></i>
              <span class="up">${icon("up", "off")}</span><i></i><span class="up">${icon("down", "off")}</span><i></i>${cmd("sort", "Sort By")}${caret}</div>
            <table class="res"><colgroup><col /><col width="82" /><col width="9" /></colgroup>
              <tr><th>Data1 (Left)</th><th>Data2 (Right)</th><th></th></tr>
              ${["RMS Level", "THD+N Ratio"].map((t) => html`<tr><td>${t}</td><td>${select("None", { label: t + " right", arrow: solid })}</td><td></td></tr>`)}
            </table>
          </div>
          <div class="nest">
            <h4 class="sect">• Nesting</h4>
            <div class="nestrow"><label for="ss" class="lbl">Secondary Source:</label>${select("None", { id: "ss" })}</div>
          </div>
        </div>
        <div class="graph">
          <div class="bar graphbar">
            ${tool("save", "Save", true)}${tool("copy", "Copy")}${tool("print", "Print")}<i></i>
            ${tool("zoom", "Zoom")}${tool("fit", "Fit")}${tool("expand", "Expand")}<i></i>${tool("cross", "Cursor")}<i></i>
            ${tool("table", "Table")}${tool("style", "Style", true)}${tool("fx", "Function")}${tool("gear", "Settings")}<i></i>
            <label for="ux">X</label>${select("Hz", { id: "ux", cls: "plain", arrow: solid })}
            <label for="uy">Y</label>${select("dBrA", { id: "uy", cls: "focus", arrow: solid })}
            <span class="grow"></span>${tool("popout", "Pop out", false, "blue")}
          </div>
          <div class="plot">${this.plot()}
            <div class="legend"><h5 class="strong">Data${icon("pin", "white")}</h5>
              <label><input type="checkbox" class="blue" .checked=${true} /><s></s>Ch1</label>
              <label class="red"><input type="checkbox" class="blue" .checked=${true} /><s></s>Ch2</label></div>
          </div>
          ${navBar(false)}
          <div class="thumbs"><a href="#" class="cur">${this.thumb(15, true)}<span>RMS Level</span></a><a href="#">${this.thumb(21, false)}<span>THD+N Ratio</span></a></div>
          <div class="split"><u></u><u></u><u></u></div>
          <div class="bar navbar sets"><span>Data Sets</span>
            <span class="sq"><input type="checkbox" aria-label="Select all" .checked=${true} /><input type="checkbox" aria-label="Select none" /></span><i></i>
            ${cmd("dataClear", "Clear Data", true)}${cmd("dataIn", "Import")}${cmd("dataOut", "Export")}${cmd("gear", "Data Settings")}
            <span class="grow"></span>${tool("upload", "Collapse", false, "blue")}</div>
          <div class="dswrap"><table class="ds"><colgroup><col width="16" /><col width="56" /><col width="89" /><col /></colgroup>
            <tr><th></th><th>Data Set</th><th>Time</th><th>Notes</th></tr>
            <tr><td><input type="checkbox" aria-label="Measured 1" .checked=${true} /></td><td>Measured 1</td><td>2024/9/30 17:42:28</td><td></td></tr></table></div>
        </div>
      </section>
    </div>`;
  }
}

/* ---------- sequence mode ---------- */

type Kind = "group" | "open" | "settings" | "steps" | "leaf" | "blocked" | "add" | "path" | "post";
interface Node { kind: Kind; text: string; sel?: boolean; }

interface BarModel {
  title: string; stamp: string; axis: string; right: number; ticks: number[]; titleX: number;
  channels: { name: string; value: string; color: string; fill: number }[];
}

const random = (seed: number) => () => {
  seed = (seed * 1664525 + 1013904223) % 4294967296;
  return seed / 4294967296;
};

@customElement("sequence-view")
class SequenceView extends LitElement {
  @property({ type: Array }) nodes: Node[] = [];
  @property({ type: Object }) model!: BarModel;
  @property() frequency = "";
  @property({ type: Boolean }) noise = false;
  @property({ type: Boolean }) hint = false;
  @property({ type: Number }) seed = 1;

  static styles = [base, css`
    .cols { display: grid; grid-template-columns: 181px 5px minmax(0, 1fr); }
    .hd { background: #4a6c81; color: #fff; font-size: 10px; height: 18px; margin: 0; display: flex; align-items: center; justify-content: space-between; padding: 0 4px 0 1px; white-space: nowrap; }
    .hd .ic { color: #fff; width: 9px; height: 9px; }
    .hd.mon { height: 18px; }
    .gut { background: #4a6c81; display: flex; flex-direction: column; justify-content: center; align-items: center; gap: 3px; }
    .gut u, .hsplit u { width: 2px; height: 2px; background: #e6edf1; }
    .hsplit { height: 4px; background: #4a6c81; display: flex; align-items: center; justify-content: center; gap: 2px; }
    .seq { background: #e3e8e9; height: 17px; gap: 4px; padding-right: 3px; }
    .seq .sel { width: 62px; height: 17px; }
    .seq .sel select { height: 17px; }
    .seq .run { width: 34px; height: 11px; border: 1px solid #2e5a74; border-radius: 2px; background: #b5dcf2; justify-content: center; margin-right: 3px; }
    .run svg { width: 6px; height: 6px; }
    .tree { display: grid; grid-template-columns: minmax(0, 1fr) 11px; background: #f3f5f6; height: 254px; grid-template-rows: 243px 11px; }
    .tree ul { list-style: none; margin: 0; padding: 1px 0 0; background: linear-gradient(#e1ecf6 1px, #fff 1px); overflow: hidden; }
    .tree li { display: flex; align-items: center; height: 12px; gap: 2px; background: #e1ecf6; white-space: nowrap; color: #16242e; }
    .tree .arr { width: 5px; height: 5px; flex: none; margin: 0 3px 0 1px; }
    .tree input { border: 1px solid #27597e; width: 8px; height: 8px; }
    .tree .ic { width: 10px; height: 10px; }
    .group, .open { padding-left: 1px; }
    .settings { padding-left: 23px; }
    .steps { padding-left: 13px; }
    .steps .arr { margin: 0 2px 0 2px; }
    .leaf, .blocked { padding-left: 24px; }
    .tree li.blocked, .tree li.leaf { gap: 3px; }
    .add { padding-left: 10px; }
    .tree li.path, .tree li.post { background: #fff; padding-left: 0; }
    .path .ic, .post .ic { margin-left: -2px; }
    .dotc { color: #3a6078; }
    .tree li.sel { background: #4a6c81; color: #fff; }
    .tree li.sel .ic { color: #d7e2ea; }
    .tree li.sel input { border-color: #fff; }
    .tree li.sel span { outline: 1px dotted #2d4858; outline-offset: -1px; }
    .vs { display: flex; justify-content: center; align-items: flex-end; }
    .vs div { width: 2px; background: #8d9296; margin-bottom: 28px; height: 116px; }
    .vs.high div { margin-bottom: 56px; height: 152px; }
    .hs { grid-column: 1 / 3; padding: 4px 23px 0 21px; }
    .hs div { height: 2px; background: #8d9296; }
    .mtools { height: 18px; background: #e3e8e9; gap: 4px; }
    .mtools .cur { outline: 2px solid #7cb8e8; }
    .bar .on { width: 29px; height: 11px; background: #57d957; border: 1px solid #3f9f3f; border-radius: 1px; color: #14431a; font-size: 7px; justify-content: space-between; padding: 0 1px 0 3px; line-height: 9px; }
    .on b { width: 9px; height: 7px; background: #a8eea0; border: 1px solid #3f9f3f; }
    .scope { padding-bottom: 1px; background: #fff; }
    .pane { display: grid; grid-template-columns: minmax(0, 267px) minmax(0, 1fr); grid-template-rows: 17px 1fr; background: #b5c5cd; }
    .pane > .hd { grid-column: 1 / 3; height: 17px; justify-content: flex-start; gap: 8px; padding-left: 3px; }
    .pane > .hd svg { width: 7px; height: 9px; }
    .cfg { padding: 3px 3px 0 2px; position: relative; }
    .cfg .start { width: 95px; margin-left: 3px; height: 19px; }
    .hr { background: #d9e1e5; }
    .gap4 { margin-top: 4px; }
    .sect { padding: 1px 3px 0; line-height: 14px; }
    .lv { border: 1px solid #9fabb1; margin: 8px 4px 0 3px; height: 50px; padding: 4px 4px 0 0; }
    .grid { display: grid; grid-template-columns: 82px 75px 9px 58px 12px; column-gap: 4px; align-items: center; }
    .grid .spin { margin-left: -3px; }
    .lv .r1 { height: 14px; } .lv .r2 { height: 13px; } .lv .r3 { height: 16px; }
    .r3 { height: 20px; }
    .below { margin-left: 4px; }
    .wave { display: grid; grid-template-columns: 86px 66px; column-gap: 4px; height: 18px; align-items: center; }
    .chs { padding: 4px 3px 0; }
    .chips { display: flex; padding: 4px 1px 6px; }
    .chips button { width: 10px; height: 11px; background: #55808c; border: 1px solid #7fa3ad; color: #fff; font-weight: 700; border-radius: 2px; line-height: 9px; }
    .flt { display: grid; grid-template-columns: 86px 80px 55px; column-gap: 5px; align-items: center; height: 18px; }
    .adv { margin: 3px 2px 0; width: 83px; display: block; }
    .hint { position: absolute; left: 222px; top: 94px; width: 63px; height: 26px; z-index: 2; background: #ffffffa0; border: 1px solid #d6dadc; box-shadow: 1px 1px 1px #8a949a; color: #8f979b; padding: 1px 3px; line-height: 12px; white-space: nowrap; }
    .graph { background: #fff; display: flex; flex-direction: column; min-width: 0; }
    .navbar { height: 16px; }
    .graphbar .sel { width: 34px; height: 16px; }
    .thumbs { padding: 4px 2px 0; }
    .thumbs a { width: 80px; color: #fff; text-decoration: none; text-align: center; display: grid; grid-template-rows: 36px 11px; justify-items: center; line-height: 11px; }
    .thumbs svg { width: 58px; height: 36px; border: 2px solid #4a6c81; background: #fff; }
    .thumbs span { width: 100%; background: #4a6c81; white-space: nowrap; }
  `];

  private scope() {
    const rnd = random(this.seed);
    const trace = () => {
      let d = "";
      for (let i = 0; i <= 250; i++) {
        const spike = rnd() > 0.9 ? 3 + rnd() * 7 : 0;
        const amp = 12 + rnd() * 8 + spike;
        d += `${i ? "L" : "M"}${(33.5 + i * 0.508).toFixed(1)} ${(68 + (i % 2 ? amp : -amp)).toFixed(1)}`;
      }
      return d;
    };
    const ys = [16, 42, 68, 94, 120];
    const xs = [33, 58.5, 84, 109.5, 135.5];
    const labels = ["20u", "10u", "0", "-10u", "-20u"];
    const times = ["0", "40m", "80m", "120m", "160m"];
    return html`<svg class="chart" viewBox="0 0 181 151" role="img" aria-label="Scope">
      ${[29, 55, 81, 107].map((y) => svg`<path d="M33 ${y}H161" stroke="#efefef"/>`)}
      ${[46, 71.5, 97, 122.5, 148].map((x) => svg`<path d="M${x} 11V126" stroke="#efefef"/>`)}
      ${ys.map((y) => svg`<path d="M33 ${y}H161" stroke="#d4d4d4"/>`)}${xs.map((x) => svg`<path d="M${x} 11V126" stroke="#d4d4d4"/>`)}
      <path d=${trace()} fill="none" stroke="#3e4f95" stroke-width="0.6" opacity="0.9"/>
      <path d=${trace()} fill="none" stroke="#b82a38" stroke-width="0.7" opacity="0.85"/>
      <rect x="33" y="11.5" width="128" height="115" fill="none" stroke="#777"/>
      <text class="ttl" x="96" y="8" text-anchor="middle">Scope</text>
      ${ys.map((y, i) => svg`<text x="30" y=${y + 3} text-anchor="end">${labels[i]}</text>`)}
      ${xs.map((x, i) => svg`<text x=${x} y="136" text-anchor="middle">${times[i]}</text>`)}
      <text x="96" y="144" text-anchor="middle">Time (s)</text>
      <text transform="translate(10 69) rotate(-90)" text-anchor="middle">Instantaneous Level (V)</text>
    </svg>`;
  }

  private plot() {
    const m = this.model, x0 = 42, x1 = m.right, y0 = 22, y1 = 359.5;
    const lo = m.ticks[0], hi = m.ticks[m.ticks.length - 1];
    const fx = (v: number) => x0 + ((v - lo) / (hi - lo)) * (x1 - x0);
    const rows = [123, 258.5];
    return html`<svg class="chart" viewBox="0 0 543 396" role="img" aria-label=${m.title}>
      ${m.ticks.slice(1).map((t) => svg`<path d="M${fx(t - 10)} ${y0}V${y1}" stroke="#efefef"/>`)}
      ${m.ticks.map((t) => svg`<path d="M${fx(t)} ${y0}V${y1}" stroke="#d9d9d9"/>`)}
      ${m.channels.map((c, i) => svg`
        ${c.fill ? svg`<rect x=${x0} y=${rows[i] - 42.5} width=${fx(c.fill) - x0} height="85" fill=${c.color}/>
          ${m.ticks.map((t) => (t < c.fill ? svg`<path d="M${fx(t)} ${rows[i] - 42}v84" stroke="#000" opacity="0.08"/>` : nothing))}` : nothing}
        <path d="M${x0} ${rows[i]}H${x1}" stroke="#000" opacity="0.15"/>
        <rect x=${x1 + 2} y=${rows[i] - 5} width="11" height="11" fill=${c.color}/>
        <text class="big" x="37" y=${rows[i] + 6} text-anchor="end">${c.name}</text>
        <text class="big" x="538" y=${rows[i] + 6} text-anchor="end">${c.value}</text>`)}
      <rect x=${x0} y=${y0} width=${x1 - x0} height=${y1 - y0} fill="none" stroke="#999"/>
      ${apMark(x1 - 17, 35)}
      <text class="ttl" x=${m.titleX} y="7" text-anchor="middle">${m.title}</text>
      <text x=${x1 - 1} y="18" text-anchor="end">${m.stamp}</text>
      ${m.ticks.map((t) => svg`<text class="big" x=${fx(t)} y="379" text-anchor="middle">${t}</text>`)}
      <text x=${m.titleX} y="391" text-anchor="middle">${m.axis}</text>
    </svg>`;
  }

  private node(n: Node) {
    const right = html`<svg class="arr" viewBox="0 0 6 6"><path d="M1 0l4 3-4 3z" fill="#111"/></svg>`;
    const down = html`<svg class="arr" viewBox="0 0 6 6"><path d="M0 1h6L3 5z" fill="#111"/></svg>`;
    const box = html`<input type="checkbox" aria-label=${n.text} />`;
    const parts: Record<Kind, unknown> = {
      group: [right, box, icon("folder")],
      open: [down, box, icon("folder")],
      settings: icon("gear"),
      steps: [right, icon("folder")],
      leaf: [box, icon("dot", "dotc")],
      blocked: [box, icon("ban", "dotc")],
      add: icon("addMeas"),
      path: icon("addPath"),
      post: icon("folder"),
    };
    return html`<li class="${n.kind} ${n.sel ? "sel" : ""}">${parts[n.kind]}<span>${n.text}</span></li>`;
  }

  private thumb() {
    return html`<svg viewBox="0 0 54 32" preserveAspectRatio="none" aria-hidden="true">
      <rect x="5" y="3" width="30" height="24" fill="none" stroke="#e2e2e2" stroke-width="0.6"/>
      ${this.model.channels.map((c, i) => svg`${c.fill ? svg`<rect x="5" y=${6 + i * 9} width="29" height="6" fill=${c.color}/>` : nothing}
        <path d="M40 ${9 + i * 9}h11M2 ${9 + i * 9}h2" stroke="#777" stroke-width="0.9" stroke-dasharray="2 0.5"/><path d="M36 ${8 + i * 9}h1.5v1.5H36z" fill=${c.color}/>`)}
      <path d="M10 29h3M22 29h3M33 29h3" stroke="#666"/></svg>`;
  }

  render() {
    return html`<div class="cols">
      <section>
        <h2 class="hd">Navigator${icon("collapse")}</h2>
        <div class="bar seq"><label for="sq">Sequence:</label>${select("Sequence 1", { id: "sq", cls: "plain", arrow: solid })}
          ${tool("gear", "Sequence settings")}${tool("lock", "Lock")}<span class="grow"></span>${tool("help", "Help", true)}</div>
        <div class="bar seq"><button class="run" aria-label="Run"><svg viewBox="0 0 6 6"><path d="M0 0l6 3-6 3z" fill="#16394c"/></svg></button><i></i>
          ${tool("addPath", "Add path")}${tool("addMeas", "Add measurement")}${tool("x", "Delete")}<i></i>${tool("docIn", "Import", false, "off")}${tool("docAdd", "Append", false, "off")}</div>
        <div class="tree"><ul>${this.nodes.map((n) => this.node(n))}</ul>
          <div class=${classMap({ vs: true, high: this.noise })}><div></div></div><div class="hs"><div></div></div></div>
        <div class="hsplit"><u></u><u></u><u></u></div>
        <h2 class="hd mon">Monitors/Meters${icon("popout")}</h2>
        <div class="bar mtools"><button class="cur" aria-label="Scope">${icon("sine")}</button>${["fft", "meters", "square", "clock", "trend", "list"].map((t) => tool(t, t))}<i></i><button class="on">ON<b></b></button></div>
        <div class="scope">${this.scope()}</div>
      </section>
      <div class="gut"><u></u><u></u><u></u></div>
      <section class="pane">
        <h2 class="hd"><svg viewBox="0 0 7 9"><path d="M6 0L1.5 4.5 6 9" fill="none" stroke="#fff" stroke-width="1.5"/></svg>${this.noise ? "Signal to Noise Ratio" : "Crosstalk, One Channel Undriven"}</h2>
        <div class="cfg">
          ${startButton()}
          <hr class="hr gap4" />
          <h4 class="sect">• Generator</h4>
          ${this.noise ? html`<div class="wave"><label class="lbl" for="wf">Waveform:</label>${select("Sine", { id: "wf" })}</div>` : nothing}
          <div class="lv">
            <div class="grid r1"><span></span>${check("Levels Track Ch1", true, "blue")}</div>
            <div class="grid r2"><span></span><span>Level</span><span></span><span>DC Offset</span></div>
            <div class="grid r3"><label class="lbl" for="l1">Ch1:</label>${select("-0.000 dBFS", { id: "l1", cls: "edge" })}${spin()}${select("0.000 D", { label: "DC Offset", cls: "edge" })}${spin()}</div>
          </div>
          <div class="grid r3 below"><label class="lbl" for="fq">Frequency:</label>${select(this.frequency, { id: "fq", cls: "edge" })}${spin()}</div>
          <div class="chs">Channels:</div>
          <div class="chips"><button>1</button><button>2</button></div>
          <hr class="hr" />
          ${this.noise ? html`<h4 class="sect">• Analyzer</h4>
            <div class="flt"><label class="lbl" for="hp">High-pass Filter:</label>${select("Elliptic", { id: "hp" })}<input class="text" aria-label="High-pass frequency" .value=${"20 Hz"} /></div>
            <div class="flt"><label class="lbl" for="lp">Low-pass Filter:</label>${select("Elliptic", { id: "lp" })}<input class="text" aria-label="Low-pass frequency" .value=${"20 kHz"} /></div>
            <div class="flt"><label class="lbl" for="wt">Weighting:</label>${select("A-wt.", { id: "wt" })}</div>
            <hr class="hr gap4" />` : nothing}
          <button class="btn adv">Advanced Settings...</button>
          ${this.hint ? html`<div class="hint" role="tooltip">0.000 D<br />00000000 hex</div>` : nothing}
        </div>
        <div class="graph">
          <div class="bar graphbar">
            ${tool("save", "Save", true)}${tool("copy", "Copy")}${tool("print", "Print")}<i></i>
            ${tool("zoom", "Zoom")}${tool("fit", "Fit")}${tool("expand", "Expand")}<i></i>
            ${tool("table", "Table")}${tool("style", "Style", true)}${tool("fx", "Function")}${tool("gear", "Settings")}<i></i>
            <label for="un">Unit</label>${select("dB", { id: "un", cls: "plain", arrow: solid })}
            <span class="grow"></span>${tool("popout", "Pop out", false, "blue")}
          </div>
          ${this.plot()}
          ${navBar(true)}
          <div class="thumbs"><a href="#">${this.thumb()}<span>${this.model.title}</span></a></div>
        </div>
      </section>
    </div>`;
  }
}

/* ---------- page ---------- */

const g = (text: string): Node => ({ kind: "group", text });
const o = (text: string): Node => ({ kind: "open", text });
const settings: Node = { kind: "settings", text: "Measurement Sequence Settings..." };
const steps: Node = { kind: "steps", text: "Sequence Steps" };
const leaf = (text: string, sel = false): Node => ({ kind: "leaf", text, sel });

const crosstalkNodes: Node[] = [
  g("Level and Gain"), g("THD+N"), g("Frequency Response"), g("Crosstalk, One Channel Undriven"), g("Interchannel Phase"),
  o("Signal to Noise Ratio"), settings, steps, leaf("Signal to Noise Ratio"),
  o("Dynamic Range - AES17"), settings, steps, leaf("Dynamic Range - AES17"),
  o("Crosstalk, One Channel Undriven"), settings, steps, leaf("Crosstalk", true),
  { kind: "add", text: "Add Measurement..." }, { kind: "path", text: "Add Signal Path" }, { kind: "post", text: "Post-Sequence Steps" },
];
const noiseNodes: Node[] = [
  settings, steps, leaf("RMS Level"), leaf("Gain"), leaf("THD+N Ratio"), leaf("Frequency"),
  { kind: "blocked", text: "Bits" }, { kind: "blocked", text: "Error Rate" },
  g("Level and Gain"), g("THD+N"), g("Frequency Response"), g("Crosstalk, One Channel Undriven"), g("Interchannel Phase"),
  o("Signal to Noise Ratio"), settings, steps, leaf("Signal to Noise Ratio", true),
  o("Dynamic Range - AES17"), settings, steps,
];

const BLUE = "#475f9a", RED = "#d15452";
const crosstalk: BarModel = {
  title: "Crosstalk", stamp: "2024/9/30 18:02:39.188", axis: "Crosstalk (dB)", right: 419.5, titleX: 230,
  ticks: [-120, -100, -80, -60, -40, -20, 0],
  channels: [{ name: "Ch1", value: "-130.998 dB", color: BLUE, fill: 0 }, { name: "Ch2", value: "-132.322 dB", color: RED, fill: 0 }],
};
const noise: BarModel = {
  title: "Signal to Noise Ratio", stamp: "2024/9/30 18:00:17.498", axis: "Signal to Noise Ratio (dB)", right: 425.5, titleX: 233,
  ticks: [0, 20, 40, 60, 80, 100, 120, 140],
  channels: [{ name: "Ch1", value: "127.741 dB", color: BLUE, fill: 127.741 }, { name: "Ch2", value: "127.787 dB", color: RED, fill: 127.787 }],
};

const status = (rate: string, level: string, band: string): StatusItem[] => [
  { label: "Output:" }, { value: "Digital Balanced" }, { value: rate }, { label: "Input 1:" },
  { value: "Analog Balanced 2 Ch, 200 kohm" }, { value: level }, { value: band }, { label: "Input 2:" }, { value: "None" },
];
const benchTools = ["square", "clock", "trend"];
const seqTools = ["sine", "fft", "list", "square", "clock", "trend"];
const seqMenus = ["File", "View", "Measurements", "Project", "Window", "Help"];

@customElement("app-root")
class AppRoot extends LitElement {
  static styles = css`
    :host { display: block; background: #6ea0aa; padding-bottom: 1px; }
    h1 { margin: 0; color: #fff; font-family: "Noto Sans CJK SC", "Noto Sans", sans-serif; font-weight: 300; font-size: 38px; line-height: 56px; text-align: center; }
    .first { padding: 47px 0 5px 42px; }
    .second { padding: 59px 28px 11px 0; }
    .third { padding: 45px 8px 13px 0; }
    .bench { --bar: #6e9fa9; }
    .seq { --bar: #6f93ab; }
  `;

  render() {
    return html`
      <h1 class="first">Frequency response</h1>
      <apx-frame class="bench" .menus=${["File", "View", "Measurements", "Project", "Help"]} .tools=${benchTools} mode="Bench Mode"
        .status=${status("192.000 kHz", "5.000 Vrms", "AC (<10 Hz) - 22.4 kHz")}><bench-view></bench-view></apx-frame>
      <h1 class="second">Crosstalk@10kHz</h1>
      <apx-frame class="seq" .menus=${seqMenus} .tools=${seqTools} mode="Sequence Mode"
        .status=${status("48.0000 kHz", "310.0 mVrms", "AC (<10 Hz) - 22.4 kHz")}>
        <sequence-view .nodes=${crosstalkNodes} .model=${crosstalk} frequency="10.0000 kHz" hint seed="7"></sequence-view></apx-frame>
      <h1 class="third">Signal to noise ratio</h1>
      <apx-frame class="seq" mnemonics .menus=${seqMenus} .tools=${seqTools} mode="Sequence Mode"
        .status=${status("48.0000 kHz", "310.0 mVrms", "AC (<10 Hz) - 20 kHz")}>
        <sequence-view .nodes=${noiseNodes} .model=${noise} frequency="1.00000 kHz" noise seed="23"></sequence-view></apx-frame>`;
  }
}
